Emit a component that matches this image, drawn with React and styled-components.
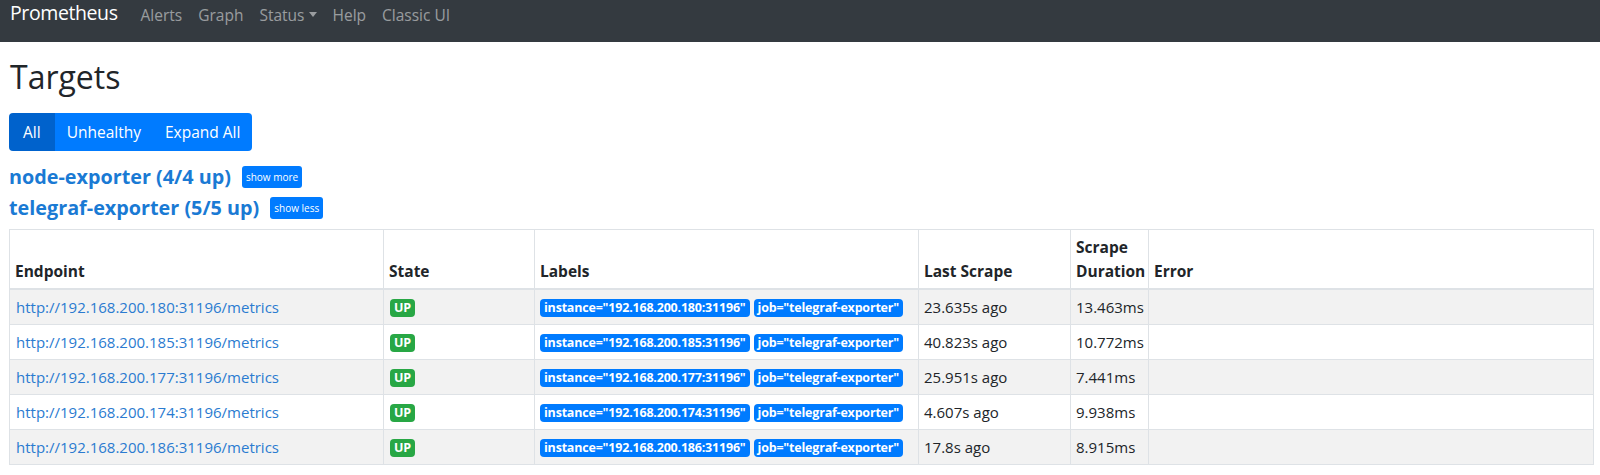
import React from "react";
import styled, { createGlobalStyle } from "styled-components";

const GlobalStyle = createGlobalStyle`
  html, body { margin: 0; padding: 0; background: #fff; }
  body {
    font-family: "Open Sans", "Noto Sans", sans-serif;
    font-size: 16px;
    line-height: 1.5;
    color: #212529;
  }
  * { box-sizing: border-box; }
`;

const Navbar = styled.nav`
  height: 42px;
  background: #343a40;
  display: flex;
  align-items: flex-start;
  padding: 0 10px;
`;

const Brand = styled.a`
  font-size: 19.5px;
  letter-spacing: -0.4px;
  line-height: 26px;
  color: #fff;
  margin-right: 15px;
  text-decoration: none;
`;

const NavList = styled.div`
  display: flex;
  align-items: center;
  padding-top: 3px;
`;

const NavLink = styled.a`
  font-size: 15.5px;
  line-height: 24px;
  padding: 0 8px;
  color: rgba(255, 255, 255, 0.5);
  text-decoration: none;
  display: inline-flex;
  align-items: center;
`;

const Caret = styled.span`
  display: inline-block;
  margin-left: 4px;
  width: 0;
  height: 0;
  border-top: 5px solid currentColor;
  border-left: 4.5px solid transparent;
  border-right: 4.5px solid transparent;
  transform: translateY(-1px);
`;

const Main = styled.main`
  padding: 0 6px 0 9px;
`;

const Title = styled.h2`
  font-size: 32px;
  font-weight: 500;
  line-height: 38px;
  margin: 16px 0 17px 1px;
`;

const ButtonGroup = styled.div`
  display: inline-flex;
  border-radius: 4px;
  overflow: hidden;
`;

const GroupButton = styled.button`
  font-family: inherit;
  font-size: 15.5px;
  line-height: 24px;
  padding: 7px 12px;
  border: 0;
  color: #fff;
  background: ${(p) => (p.$active ? "#0062cc" : "#007bff")};
  &:first-child { padding: 7px 14px; }
`;

const JobList = styled.div`
  margin-top: 10px;
  display: flex;
  flex-direction: column;
`;

const JobRow = styled.div`
  display: flex;
  align-items: center;
  height: 31px;
`;

const JobTitle = styled.a`
  font-size: 19.8px;
  font-weight: 700;
  color: #1a7ad4;
  text-decoration: none;
  margin-right: 11px;
`;

const SmallButton = styled.button`
  font-family: inherit;
  font-size: 10px;
  line-height: 16px;
  padding: 3px 4px;
  border: 0;
  border-radius: 3px;
  color: #fff;
  background: #007bff;
`;

const Table = styled.table`
  margin-top: 6px;
  width: 100%;
  border-collapse: collapse;
  table-layout: fixed;
  border: 1px solid #dee2e6;
`;

const Col = styled.col`
  width: ${(p) => p.$w || "auto"};
`;

const Th = styled.th`
  text-align: left;
  vertical-align: bottom;
  font-weight: 700;
  font-size: 15.5px;
  line-height: 24px;
  padding: 4.8px 5px;
  border: 1px solid #dee2e6;
  border-bottom-width: 2px;
`;

const Tr = styled.tr`
  background: ${(p) => (p.$striped ? "#f2f2f2" : "#fff")};
`;

const Td = styled.td`
  font-size: 15px;
  line-height: 24px;
  padding: 5px 5px;
  border: 1px solid #dee2e6;
  vertical-align: top;
  white-space: nowrap;
`;

const Link = styled.a`
  color: #2a7bd0;
  text-decoration: none;
  padding-left: 1px;
`;

const Badge = styled.span`
  display: inline-block;
  font-size: 12.5px;
  font-weight: 700;
  line-height: 1;
  padding: 3px 4px;
  border-radius: 4px;
  color: #fff;
  background: ${(p) => (p.$kind === "success" ? "#28a745" : "#007bff")};
  margin-right: 4px;
  letter-spacing: -0.2px;
  vertical-align: 1px;
`;

const StateCell = styled(Td)`
  padding-left: 6px;
`;

const rows = [
  { ip: "192.168.200.180", last: "23.635s ago", dur: "13.463ms" },
  { ip: "192.168.200.185", last: "40.823s ago", dur: "10.772ms" },
  { ip: "192.168.200.177", last: "25.951s ago", dur: "7.441ms" },
  { ip: "192.168.200.174", last: "4.607s ago", dur: "9.938ms" },
  { ip: "192.168.200.186", last: "17.8s ago", dur: "8.915ms" },
];

export default function App() {
  return (
    <>
      <GlobalStyle />
      <Navbar>
        <Brand href="#">Prometheus</Brand>
        <NavList>
          <NavLink href="#">Alerts</NavLink>
          <NavLink href="#">Graph</NavLink>
          <NavLink href="#">
            Status
            <Caret />
          </NavLink>
          <NavLink href="#">Help</NavLink>
          <NavLink href="#">Classic UI</NavLink>
        </NavList>
      </Navbar>
      <Main>
        <Title>Targets</Title>
        <ButtonGroup>
          <GroupButton $active>All</GroupButton>
          <GroupButton>Unhealthy</GroupButton>
          <GroupButton>Expand All</GroupButton>
        </ButtonGroup>
        <JobList>
          <JobRow>
            <JobTitle href="#">node-exporter (4/4 up)</JobTitle>
            <SmallButton>show more</SmallButton>
          </JobRow>
          <JobRow>
            <JobTitle href="#">telegraf-exporter (5/5 up)</JobTitle>
            <SmallButton>show less</SmallButton>
          </JobRow>
        </JobList>
        <Table>
          <colgroup>
            <Col $w="374px" />
            <Col $w="151px" />
            <Col $w="384px" />
            <Col $w="152px" />
            <Col $w="78px" />
            <Col />
          </colgroup>
          <thead>
            <tr>
              <Th>Endpoint</Th>
              <Th>State</Th>
              <Th>Labels</Th>
              <Th>Last Scrape</Th>
              <Th>Scrape Duration</Th>
              <Th>Error</Th>
            </tr>
          </thead>
          <tbody>
            {rows.map((r, i) => (
              <Tr key={r.ip} $striped={i % 2 === 0}>
                <Td>
                  <Link href="#">{`http://${r.ip}:31196/metrics`}</Link>
                </Td>
                <StateCell>
                  <Badge $kind="success">UP</Badge>
                </StateCell>
                <Td>
                  <Badge>{`instance="${r.ip}:31196"`}</Badge>
                  <Badge>job="telegraf-exporter"</Badge>
                </Td>
                <Td>{r.last}</Td>
                <Td>{r.dur}</Td>
                <Td />
              </Tr>
            ))}
          </tbody>
        </Table>
      </Main>
    </>
  );
}
